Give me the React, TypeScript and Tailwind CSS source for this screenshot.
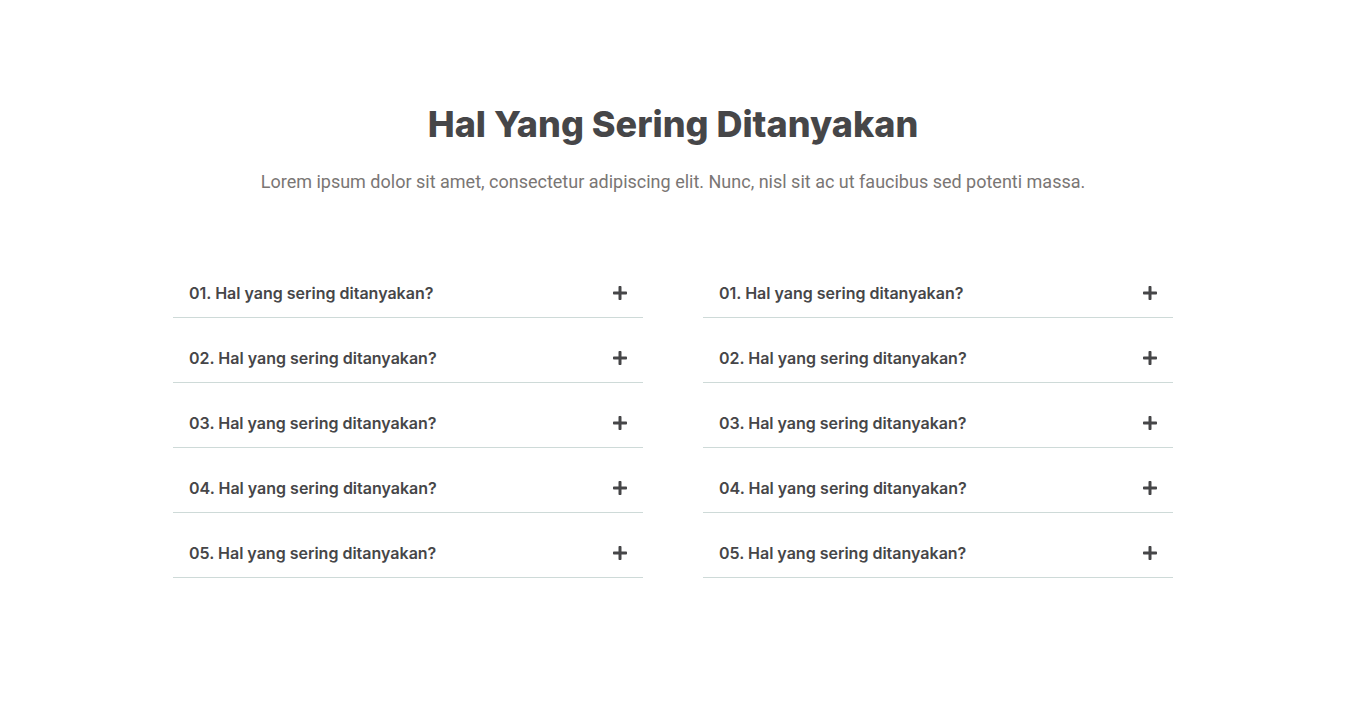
import { useState } from "react";
import { FaMinus, FaPlus } from "react-icons/fa";

const questions = ["01", "02", "03", "04", "05"].map((n) => `${n}. Hal yang sering ditanyakan?`);

const answer =
  "Lorem ipsum dolor sit amet, consectetur adipiscing elit. Nunc, nisl sit ac ut faucibus sed potenti massa.";

function Accordion({ id }: { id: string }) {
  const [open, setOpen] = useState<number | null>(null);

  return (
    <div className="flex flex-col">
      {questions.map((question, i) => {
        const expanded = open === i;
        return (
          <div key={question} className="border-b border-[#cedad8]">
            <h3>
              <button
                type="button"
                aria-expanded={expanded}
                aria-controls={`${id}-${i}`}
                onClick={() => setOpen(expanded ? null : i)}
                className="flex h-16 w-full cursor-pointer items-end justify-between px-4 pb-4 text-left font-['Inter',sans-serif] text-base leading-4 font-semibold text-[#464648]"
              >
                <span>{question}</span>
                {expanded ? (
                  <FaMinus aria-hidden="true" className="h-4 w-[14px] shrink-0" />
                ) : (
                  <FaPlus aria-hidden="true" className="h-4 w-[14px] shrink-0" />
                )}
              </button>
            </h3>
            <div id={`${id}-${i}`} hidden={!expanded} className="px-4 pb-4 text-base text-[#7a7674]">
              {answer}
            </div>
          </div>
        );
      })}
    </div>
  );
}

export default function App() {
  return (
    <main className="min-h-screen bg-white px-6 py-24 font-['Roboto',sans-serif]">
      <section className="mx-auto max-w-[1000px]">
        <header className="text-center">
          <h2 className="pt-1 font-['Inter',sans-serif] text-4xl leading-12 font-extrabold text-[#464648]">
            Hal Yang Sering Ditanyakan
          </h2>
          <p className="mt-5 text-lg leading-7 text-[#7a7674]">{answer}</p>
        </header>
        <div className="mt-[57px] grid items-start md:grid-cols-2 md:gap-x-15">
          <Accordion id="left" />
          <Accordion id="right" />
        </div>
      </section>
    </main>
  );
}
